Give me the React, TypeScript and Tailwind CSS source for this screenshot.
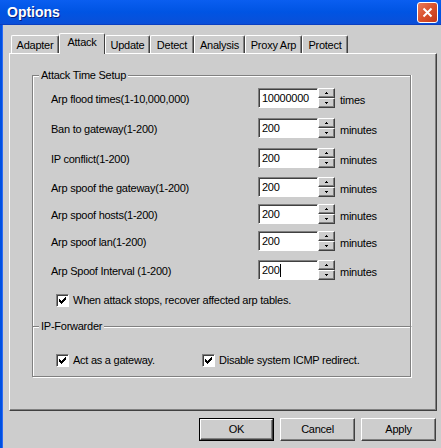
import React from "react";

const raised =
  "border border-t-white border-l-white border-r-[#404040] border-b-[#404040] shadow-[inset_-1px_-1px_0_#808080]";
const sunken =
  "border border-t-[#808080] border-l-[#808080] border-r-white border-b-white shadow-[inset_1px_1px_0_#404040]";

function Arrow({ up }: { up?: boolean }) {
  return (
    <svg width="5" height="3" viewBox="0 0 5 3" shapeRendering="crispEdges">
      {up ? <path d="M2 0h1v1h1v1H1V1h1z" fill="#000" /> : <path d="M1 0h3v1H3v1H2V1H1z" fill="#000" />}
    </svg>
  );
}

function Spin({ value, caret }: { value: string; caret?: boolean }) {
  return (
    <div className="flex items-center">
      <div className={`w-[60px] h-[20px] bg-white ${sunken} flex items-center pl-[3px] text-black`}>
        {value}
        {caret && <span className="w-px h-[13px] bg-black" />}
      </div>
      <div className="flex flex-col">
        <div className={`w-[17px] h-[10px] bg-[#cdcdcd] ${raised} flex items-center justify-center`}>
          <Arrow up />
        </div>
        <div className={`w-[17px] h-[10px] bg-[#cdcdcd] ${raised} flex items-center justify-center`}>
          <Arrow />
        </div>
      </div>
    </div>
  );
}

function Row({ label, value, unit, mt, caret }: { label: string; value: string; unit: string; mt: string; caret?: boolean }) {
  return (
    <div className={`flex items-center ${mt}`}>
      <span className="w-[207px] pt-[3px]">{label}</span>
      <Spin value={value} caret={caret} />
      <span className="ml-[5px] pt-[4px]">{unit}</span>
    </div>
  );
}

function Check({ label, className }: { label: string; className?: string }) {
  return (
    <div className={`flex items-center ${className ?? ""}`}>
      <div className={`w-[13px] h-[13px] bg-white ${sunken} flex items-center justify-center`}>
        <svg width="7" height="7" viewBox="0 0 7 7" shapeRendering="crispEdges">
          <path d="M0 2h1v1h1v1h1V3h1V2h1V1h1V0h1v3H6v1H5v1H4v1H3v1H2V6H1V5H0z" fill="#000" />
        </svg>
      </div>
      <span className="ml-[4px]">{label}</span>
    </div>
  );
}

const tabs = [
  { name: "Adapter", w: "w-[48px]" },
  { name: "Attack", w: "w-[46px]" },
  { name: "Update", w: "w-[45px]" },
  { name: "Detect", w: "w-[44px]" },
  { name: "Analysis", w: "w-[51px]" },
  { name: "Proxy Arp", w: "w-[57px]" },
  { name: "Protect", w: "w-[46px]" },
];

export default function App() {
  return (
    <div className="w-[441px] h-[448px] overflow-hidden bg-[#cdcdcd] flex flex-col font-['Liberation_Sans',Arial,sans-serif] text-[11px] tracking-[-0.25px] text-black leading-none">
      {/* title bar */}
      <div className="h-[25px] shrink-0 bg-gradient-to-b from-[#0a5ef0] via-[#0054e3] to-[#0a4fd8] flex items-center justify-between pl-[7px] pr-[3px] border-b border-[#0a3fc0]">
        <span className="text-white font-bold text-[14px] tracking-normal [text-shadow:1px_1px_0_#0a1e78]">Options</span>
        <div className="w-[21px] h-[21px] rounded-[3px] border border-white bg-gradient-to-br from-[#e8795a] via-[#d9512c] to-[#c2381a] flex items-center justify-center">
          <svg width="11" height="11" viewBox="0 0 11 11">
            <path d="M1.5 1.5L9.5 9.5M9.5 1.5L1.5 9.5" stroke="#fff" strokeWidth="2" />
          </svg>
        </div>
      </div>

      <div className="flex flex-1">
        <div className="w-[3px] bg-[#0050e0] border-r border-[#2a6af5]" />
        <div className="flex flex-col flex-1">
          {/* tabs */}
          <div className="flex items-end ml-[8px] mt-[8px] h-[20px]">
            {tabs.map((t) =>
              t.name === "Attack" ? (
                <div
                  key={t.name}
                  className={`${t.w} h-[21px] -mb-px z-10 bg-[#cdcdcd] border-l border-t border-r border-l-white border-t-white border-r-[#404040] rounded-t-[2px] flex items-center justify-center pb-[3px]`}
                >
                  {t.name}
                </div>
              ) : (
                <div
                  key={t.name}
                  className={`${t.w} h-[18px] bg-[#cdcdcd] border-l border-t border-r border-l-white border-t-white border-r-[#404040] shadow-[inset_-1px_0_0_#808080] rounded-t-[2px] flex items-center justify-center pt-[2px]`}
                >
                  {t.name}
                </div>
              )
            )}
          </div>

          {/* panel */}
          <div className="ml-[6px] w-[428px] h-[358px] border border-t-white border-l-white border-r-[#404040] border-b-[#404040] shadow-[inset_-1px_-1px_0_#808080] pl-[22px] pt-[21px]">
            <div className="relative w-[379px] h-[251px] border-t border-l border-r border-[#808080] shadow-[inset_1px_1px_0_#fff,1px_0_0_#fff] pl-[18px] pt-[12px]">
              <span className="absolute -top-[6px] left-[6px] bg-[#cdcdcd] px-[2px]">Attack Time Setup</span>
              <Row label="Arp flood times(1-10,000,000)" value="10000000" unit="times" mt="mt-0" />
              <Row label="Ban to gateway(1-200)" value="200" unit="minutes" mt="mt-[10px]" />
              <Row label="IP conflict(1-200)" value="200" unit="minutes" mt="mt-[10px]" />
              <Row label="Arp spoof the gateway(1-200)" value="200" unit="minutes" mt="mt-[9px]" />
              <Row label="Arp spoof hosts(1-200)" value="200" unit="minutes" mt="mt-[7px]" />
              <Row label="Arp spoof lan(1-200)" value="200" unit="minutes" mt="mt-[7px]" />
              <Row label="Arp Spoof Interval (1-200)" value="200" unit="minutes" mt="mt-[9px]" caret />
              <Check className="ml-[5px] mt-[14px]" label="When attack stops, recover affected arp tables." />
            </div>
            <div className="relative w-[379px] h-[51px] border border-[#808080] shadow-[inset_1px_1px_0_#fff,1px_1px_0_#fff] pl-[23px] pt-[18px] flex">
              <span className="absolute -top-[6px] left-[6px] bg-[#cdcdcd] px-[2px]">IP-Forwarder</span>
              <Check className="w-[146px]" label="Act as a gateway." />
              <Check label="Disable system ICMP redirect." />
            </div>
          </div>

          {/* buttons */}
          <div className="flex justify-end gap-[6px] mt-[7px] w-[433px]">
            <div className="w-[75px] h-[23px] border border-black">
              <div className={`w-full h-full ${raised} flex items-center justify-center`}>OK</div>
            </div>
            <div className={`w-[75px] h-[23px] ${raised} flex items-center justify-center`}>Cancel</div>
            <div className={`w-[75px] h-[23px] ${raised} flex items-center justify-center`}>Apply</div>
          </div>
        </div>
      </div>
    </div>
  );
}
